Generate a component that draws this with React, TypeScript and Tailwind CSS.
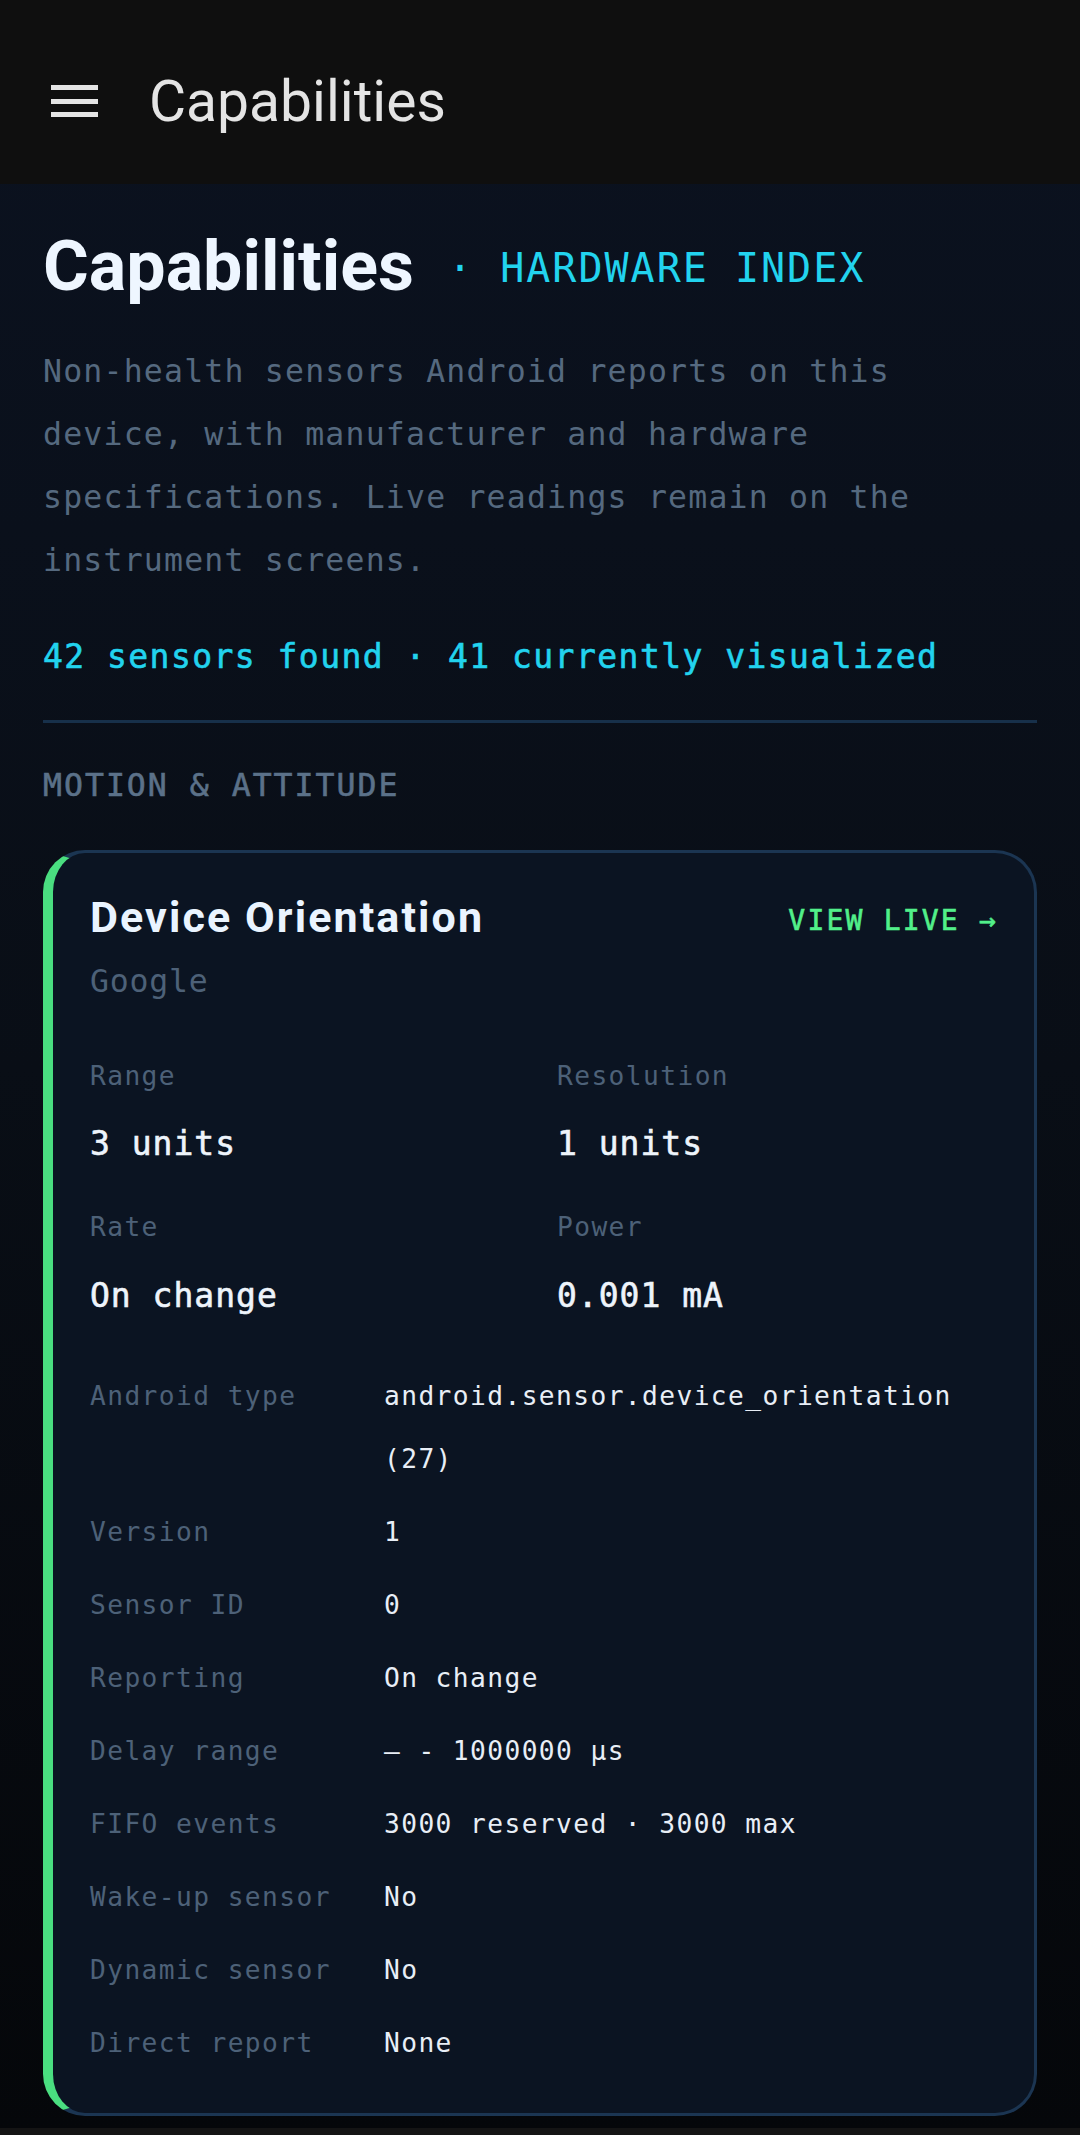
import React from 'react';

const mono = "font-['DejaVu_Sans_Mono',monospace]";
const medium = '[-webkit-text-stroke:0.6px_currentColor]';

const specs = [
  { label: 'Range', value: '3 units' },
  { label: 'Resolution', value: '1 units' },
  { label: 'Rate', value: 'On change' },
  { label: 'Power', value: '0.001 mA' },
];

const details = [
  { label: 'Android type', value: 'android.sensor.device_orientation (27)' },
  { label: 'Version', value: '1' },
  { label: 'Sensor ID', value: '0' },
  { label: 'Reporting', value: 'On change' },
  { label: 'Delay range', value: '— - 1000000 µs' },
  { label: 'FIFO events', value: '3000 reserved · 3000 max' },
  { label: 'Wake-up sensor', value: 'No' },
  { label: 'Dynamic sensor', value: 'No' },
  { label: 'Direct report', value: 'None' },
];

function TopBar() {
  return (
    <header className="h-[184px] shrink-0 bg-[#0f0f0f] pt-[18px] flex items-center">
      <div className="ml-[51px] w-[47px] h-[32px] flex flex-col justify-between">
        <span className="block h-[5px] bg-[#e4e4e4]" />
        <span className="block h-[5px] bg-[#e4e4e4]" />
        <span className="block h-[5px] bg-[#e4e4e4]" />
      </div>
      <h1 className="ml-[51px] font-['Roboto',sans-serif] text-[57px] leading-none text-[#e4e4e4]">
        Capabilities
      </h1>
    </header>
  );
}

function SensorCard() {
  return (
    <div className="mt-[41px] rounded-[42px] border-[3px] border-l-[10px] border-[#1b3552] border-l-[#4ade80] bg-[#0b1422] pl-[37px] pr-[36px] pt-[39px] pb-[38px]">
      <div className="flex items-start justify-between">
        <div className="font-['Roboto',sans-serif] font-bold text-[43px] leading-[1.2] tracking-[2.1px] text-[#eaf4ff]">
          Device Orientation
        </div>
        <div className={`${mono} ${medium} mt-[12px] text-[28px] leading-[1.2] tracking-[2.2px] text-[#52ef8a]`}>
          VIEW LIVE →
        </div>
      </div>
      <div className={`${mono} mt-[15px] text-[31.5px] leading-[1.5] tracking-[0.8px] text-[#4d6178]`}>
        Google
      </div>

      <div className="mt-[51px] grid grid-cols-2 gap-x-[26px] gap-y-[39.5px]">
        {specs.map((s) => (
          <div key={s.label} className={mono}>
            <div className="text-[26.25px] leading-[1.5] tracking-[1.4px] text-[#4d6178]">{s.label}</div>
            <div className={`${medium} mt-[23.5px] text-[33px] leading-[1.5] tracking-[1px] text-[#eef4fb]`}>
              {s.value}
            </div>
          </div>
        ))}
      </div>

      <div className={`${mono} mt-[44px] flex flex-col gap-[10px] text-[26.25px] leading-[63px] tracking-[1.4px]`}>
        {details.map((d) => (
          <div key={d.label} className="flex">
            <div className="w-[294px] shrink-0 text-[#4d6178]">{d.label}</div>
            <div className="flex-1 text-[#e8eef6]">{d.value}</div>
          </div>
        ))}
      </div>
    </div>
  );
}

export default function App() {
  return (
    <div className="w-[1080px] min-h-[2135px] flex flex-col bg-linear-to-b from-[#0b1220] via-[#090e16] to-[#05070a]">
      <TopBar />
      <main className="flex-1 px-[43px] pt-[47px]">
        <div className="flex items-baseline">
          <h2 className="font-['Roboto',sans-serif] font-bold text-[70px] leading-none text-[#eef6ff]">
            Capabilities
          </h2>
          <span className={`${mono} ml-[34px] -translate-y-[8px] text-[40px] leading-none tracking-[2px] text-[#22d3ee]`}>
            · HARDWARE INDEX
          </span>
        </div>

        <p className={`${mono} mt-[39px] text-[31.5px] leading-[63px] tracking-[1.2px] text-[#55697f]`}>
          Non-health sensors Android reports on this device, with manufacturer and hardware specifications. Live
          readings remain on the instrument screens.
        </p>

        <div className={`${mono} ${medium} mt-[40px] text-[33px] leading-[1.5] tracking-[1.45px] text-[#22d3ee]`}>
          42 sensors found · 41 currently visualized
        </div>

        <div className="mt-[38px] h-[3px] bg-[#17304a]" />

        <div className={`${mono} ${medium} mt-[39px] text-[31.5px] leading-[1.5] tracking-[2px] text-[#5b7189]`}>
          MOTION &amp; ATTITUDE
        </div>

        <SensorCard />
      </main>
      <div className="mt-[11px] h-[7px] bg-[#141414]" />
    </div>
  );
}
